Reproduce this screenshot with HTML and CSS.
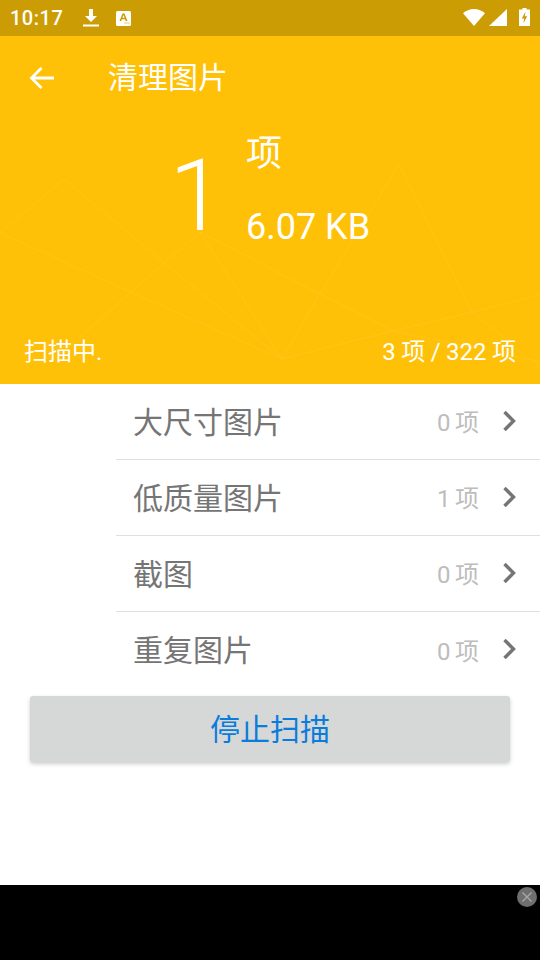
FILE: index.html
```html
<!DOCTYPE html>
<html lang="zh">
<head>
<meta charset="utf-8">
<title>清理图片</title>
<link rel="stylesheet" href="styles.css">
</head>
<body>
<div class="app">
  <div class="statusbar">
    <span class="time">10:17</span>
    <svg class="si-dl" width="18" height="20" viewBox="0 0 18 20"><path d="M7 1h4v7h4l-6 6-6-6h4z" fill="#fff"/><rect x="1" y="16.500" width="16" height="2" fill="#fff"/></svg>
    <svg class="si-a" width="16" height="16" viewBox="0 0 16 16"><rect x="0" y="1" width="15" height="15" rx="1.500" fill="#fff"/><path d="M3.500 11 6.500 3.500h2l3 7.500H9.700l-.6-1.700H5.900L5.300 11zM6.400 7.800h2.200L7.500 5z" fill="#cc9c04"/><rect x="8.500" y="12.500" width="1" height="1" fill="#cc9c04"/><rect x="10.500" y="12.500" width="1" height="1" fill="#cc9c04"/><rect x="12.500" y="12.500" width="1" height="1" fill="#cc9c04"/></svg>
    <span class="spacer"></span>
    <svg class="si-wifi" width="22" height="17" viewBox="0 0 22 17"><path d="M0 4.300C3 1.600 6.800 0 11 0s8 1.600 11 4.300L11 17z" fill="#fff"/></svg>
    <svg class="si-sig" width="18" height="17" viewBox="0 0 18 17"><path d="M18 0V17H0z" fill="#fff"/></svg>
    <svg class="si-bat" width="11" height="18" viewBox="0 0 11 18"><path d="M3.500 0h4v1.500H11V18H0V1.500h3.500z" fill="#fff"/><path d="M6.500 3.500 2.800 10.500h2.400L4.300 15.500l3.900-7.300H5.800z" fill="#cc9c04"/></svg>
  </div>
  <header class="hero">
    <svg class="mesh" width="540" height="348" viewBox="0 36 540 348" fill="none" stroke="#fff" stroke-opacity=".07" stroke-width="1">
      <path d="M0 233 64 179 162 261 282 359"/>
      <path d="M0 233 131 292 282 359"/>
      <path d="M200 232 131 292 69 347"/>
      <path d="M200 232 282 359"/>
      <path d="M200 232 320 294 393 331 537 361"/>
      <path d="M282 359 320 294 399 164 472 312 393 331 282 359"/>
      <path d="M472 312 540 295"/>
      <path d="M472 312 530 359 540 365"/>
    </svg>
    <div class="toolbar">
      <svg class="back" width="26" height="24" viewBox="0 0 26 24"><path d="M25 12H3M12.500 2 2.500 12l10 10" fill="none" stroke="#fff" stroke-width="2.800"/></svg>
      <h1 class="title">清理图片</h1>
    </div>
    <div class="summary">
      <div class="count">1</div>
      <div class="meta">
        <div class="unit">项</div>
        <div class="size">6.07 KB</div>
      </div>
    </div>
    <div class="progress">
      <span>扫描中.</span>
      <span class="tally">3 项 / 322 项</span>
    </div>
  </header>
  <main class="list">
    <div class="row"><span class="name">大尺寸图片</span><span class="num">0 项</span><svg class="chev" width="14" height="22" viewBox="0 0 14 22"><path d="M2.500 2 11.500 11l-9 9" fill="none" stroke="#757575" stroke-width="3.400"/></svg></div>
    <div class="row"><span class="name">低质量图片</span><span class="num">1 项</span><svg class="chev" width="14" height="22" viewBox="0 0 14 22"><path d="M2.500 2 11.500 11l-9 9" fill="none" stroke="#757575" stroke-width="3.400"/></svg></div>
    <div class="row"><span class="name">截图</span><span class="num">0 项</span><svg class="chev" width="14" height="22" viewBox="0 0 14 22"><path d="M2.500 2 11.500 11l-9 9" fill="none" stroke="#757575" stroke-width="3.400"/></svg></div>
    <div class="row"><span class="name">重复图片</span><span class="num">0 项</span><svg class="chev" width="14" height="22" viewBox="0 0 14 22"><path d="M2.500 2 11.500 11l-9 9" fill="none" stroke="#757575" stroke-width="3.400"/></svg></div>
  </main>
  <div class="action"><button class="stop">停止扫描</button></div>
  <footer class="ad">
    <svg class="close" width="22" height="22" viewBox="0 0 22 22"><circle cx="11" cy="11" r="10" fill="#6e6e6e"/><path d="M6.500 6.500l9 9M15.500 6.500l-9 9" stroke="#a8a8a8" stroke-width="1.400"/></svg>
  </footer>
</div>
</body>
</html>
```
FILE: styles.css
```css
* { box-sizing: border-box; }
html, body { margin: 0; padding: 0; }
body {
  width: 540px;
  height: 960px;
  overflow: hidden;
  background: #fff;
  font-family: Roboto, "Noto Sans CJK SC", sans-serif;
}
.app { display: flex; flex-direction: column; height: 960px; }
.statusbar {
  height: 36px;
  flex: none;
  background: #cc9c04;
  color: #fff;
  display: flex;
  align-items: center;
  padding: 0 10px 0 10px;
}
.time { font-size: 20px; font-weight: 500; letter-spacing: .5px; width: 62px; }
.si-dl { margin-left: 10px; }
.si-a { margin-left: 16px; }
.spacer { flex: 1; }
.si-wifi { margin: 0 4px 1px 0; }
.si-sig { margin: 0 12px 1px 0; }
.si-bat { margin-bottom: 2px; }
.hero {
  height: 348px;
  flex: none;
  background: #ffc107;
  color: #fff;
  position: relative;
  display: flex;
  flex-direction: column;
}
.mesh { position: absolute; left: 0; top: 0; }
.toolbar {
  display: flex;
  align-items: center;
  height: 84px;
  padding-left: 29px;
  position: relative;
}
.title { margin: 0 0 0 53px; font-size: 30px; font-weight: 400; line-height: 40px; }
.summary {
  display: flex;
  position: relative;
  height: 215px;
  padding-left: 169px;
}
.count { font-size: 100px; font-weight: 300; line-height: 122px; width: 77px; margin-top: 15px; }
.meta { display: flex; flex-direction: column; }
.unit { font-size: 36px; line-height: 46px; margin-top: 11px; }
.size { font-size: 36px; line-height: 44px; margin-top: 28px; }
.progress {
  position: relative;
  display: flex;
  justify-content: space-between;
  padding: 0 24px 0 24px;
  font-size: 24px;
  line-height: 34px;
}
.tally { word-spacing: -.5px; }
.list { padding-left: 116px; }
.row {
  height: 76px;
  display: flex;
  align-items: center;
  border-bottom: 1px solid #e0e0e0;
  padding: 0 24px 0 17px;
}
.row:last-child { border-bottom: 0; }
.name { flex: 1; font-size: 30px; color: #757575; padding-bottom: 4px; }
.num { font-size: 24px; color: #bdbdbd; margin-right: 23px; padding-bottom: 2px; word-spacing: -1.5px; }
.chev { margin-bottom: 2px; }
.action { padding: 8px 30px 0; }
.stop {
  width: 480px;
  height: 66px;
  display: block;
  border: 0;
  border-radius: 3px;
  background: #d6d7d7;
  box-shadow: 0 2px 4px rgba(0,0,0,.2);
  color: #0a7cdc;
  font-family: inherit;
  font-size: 30px;
  padding: 0 0 4px;
}
.ad {
  margin-top: auto;
  height: 75px;
  background: #000;
  position: relative;
}
.close { position: absolute; right: 2px; top: 1px; }
```
